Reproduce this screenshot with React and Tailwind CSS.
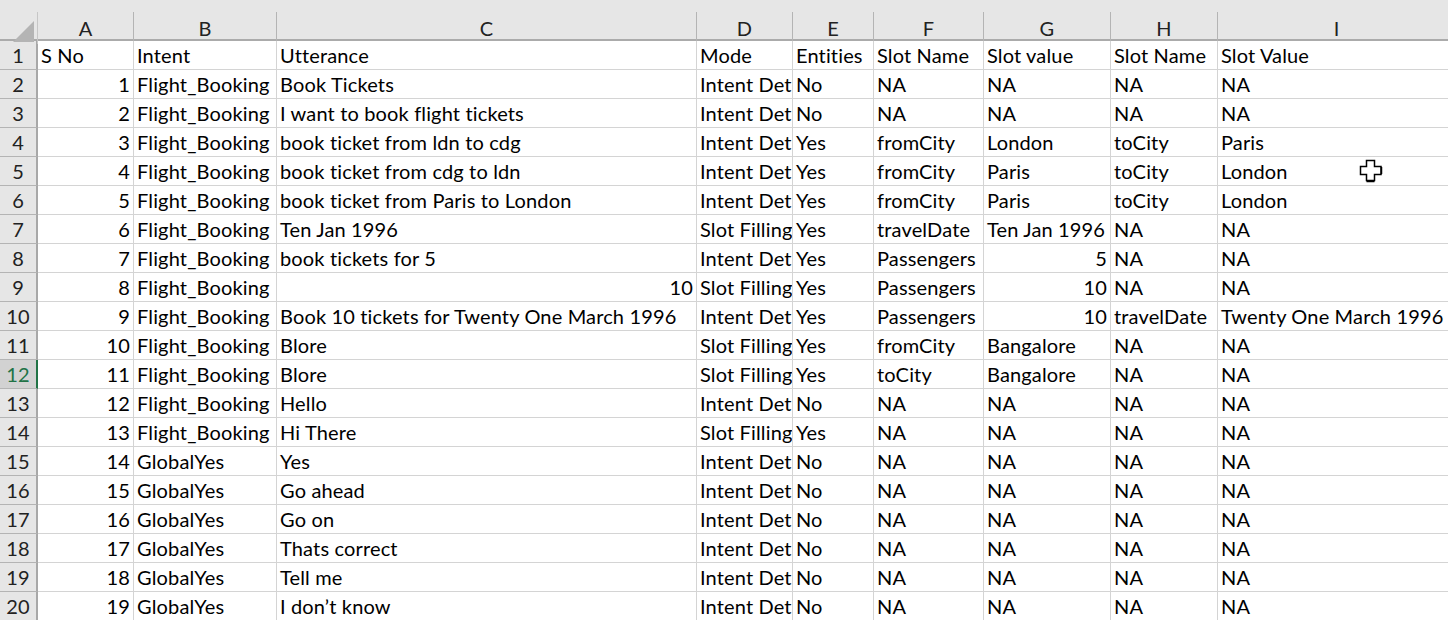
const cols = ['A','B','C','D','E','F','G','H','I'];
const ID = 'Intent Det', SF = 'Slot Filling', FB = 'Flight_Booking', GY = 'GlobalYes';
const rows = [
  ['S No','Intent','Utterance','Mode','Entities','Slot Name','Slot value','Slot Name','Slot Value'],
  [1,FB,'Book Tickets',ID,'No','NA','NA','NA','NA'],
  [2,FB,'I want to book flight tickets',ID,'No','NA','NA','NA','NA'],
  [3,FB,'book ticket from ldn to cdg',ID,'Yes','fromCity','London','toCity','Paris'],
  [4,FB,'book ticket from cdg to ldn',ID,'Yes','fromCity','Paris','toCity','London'],
  [5,FB,'book ticket from Paris to London',ID,'Yes','fromCity','Paris','toCity','London'],
  [6,FB,'Ten Jan 1996',SF,'Yes','travelDate','Ten Jan 1996','NA','NA'],
  [7,FB,'book tickets for 5',ID,'Yes','Passengers',5,'NA','NA'],
  [8,FB,10,SF,'Yes','Passengers',10,'NA','NA'],
  [9,FB,'Book 10 tickets for Twenty One March 1996',ID,'Yes','Passengers',10,'travelDate','Twenty One March 1996'],
  [10,FB,'Blore',SF,'Yes','fromCity','Bangalore','NA','NA'],
  [11,FB,'Blore',SF,'Yes','toCity','Bangalore','NA','NA'],
  [12,FB,'Hello',ID,'No','NA','NA','NA','NA'],
  [13,FB,'Hi There',SF,'Yes','NA','NA','NA','NA'],
  [14,GY,'Yes',ID,'No','NA','NA','NA','NA'],
  [15,GY,'Go ahead',ID,'No','NA','NA','NA','NA'],
  [16,GY,'Go on',ID,'No','NA','NA','NA','NA'],
  [17,GY,'Thats correct',ID,'No','NA','NA','NA','NA'],
  [18,GY,'Tell me',ID,'No','NA','NA','NA','NA'],
  [19,GY,'I don’t know',ID,'No','NA','NA','NA','NA'],
];
const gridCols = 'grid grid-cols-[38px_96px_143px_420px_96px_81px_110px_127px_107px_238px]';

export default function App() {
  return (
    <div className="relative w-[1448px] h-[620px] overflow-hidden bg-white text-[20px] tracking-[0.15px] leading-[26px] text-black font-['Lato','Carlito','Open_Sans',sans-serif]">
      <div className={`${gridCols} h-[41px] pt-3 bg-[#e6e6e6] border-b-2 border-[#ababab]`}>
        <div className="relative border-r border-[#c6c6c6]">
          <svg className="absolute right-[3px] bottom-[2px]" width="21" height="21" viewBox="0 0 21 21">
            <polygon points="21,0 21,21 0,21" fill="#b4b4b4" />
          </svg>
        </div>
        {cols.map((c) => (
          <div key={c} className="text-center text-[#222] leading-[32px] border-r border-[#b4b4b4]">{c}</div>
        ))}
      </div>
      {rows.map((r, i) => (
        <div key={i} className={`${gridCols} h-[29px]`}>
          <div className={`text-center pt-px border-b border-[#b4b4b4] ${i === 11 ? 'bg-[#d2d2d2] text-[#217346] border-r-2 border-r-[#217346]' : 'bg-[#e6e6e6] text-[#222] border-r-2 border-r-[#a8a8a8]'}`}>
            {i + 1}
          </div>
          {r.map((v, j) => (
            <div
              key={j}
              className={`overflow-hidden whitespace-nowrap pt-px px-[3px] border-r border-b border-[#d4d4d4] ${typeof v === 'number' ? 'text-right' : 'text-left'}`}
            >
              {v}
            </div>
          ))}
        </div>
      ))}
      <svg className="absolute left-[1359px] top-[159px]" width="24" height="24" viewBox="0 0 24 24">
        <path d="M7.5 1.5h8v6h6.5v8h-6.5v6h-8v-6h-6v-8h6z" fill="#fff" stroke="#000" strokeWidth="1.5" />
        <path d="M7.5 22.5h8M22.5 8v7" stroke="#000" strokeWidth="1.5" fill="none" />
      </svg>
    </div>
  );
}
